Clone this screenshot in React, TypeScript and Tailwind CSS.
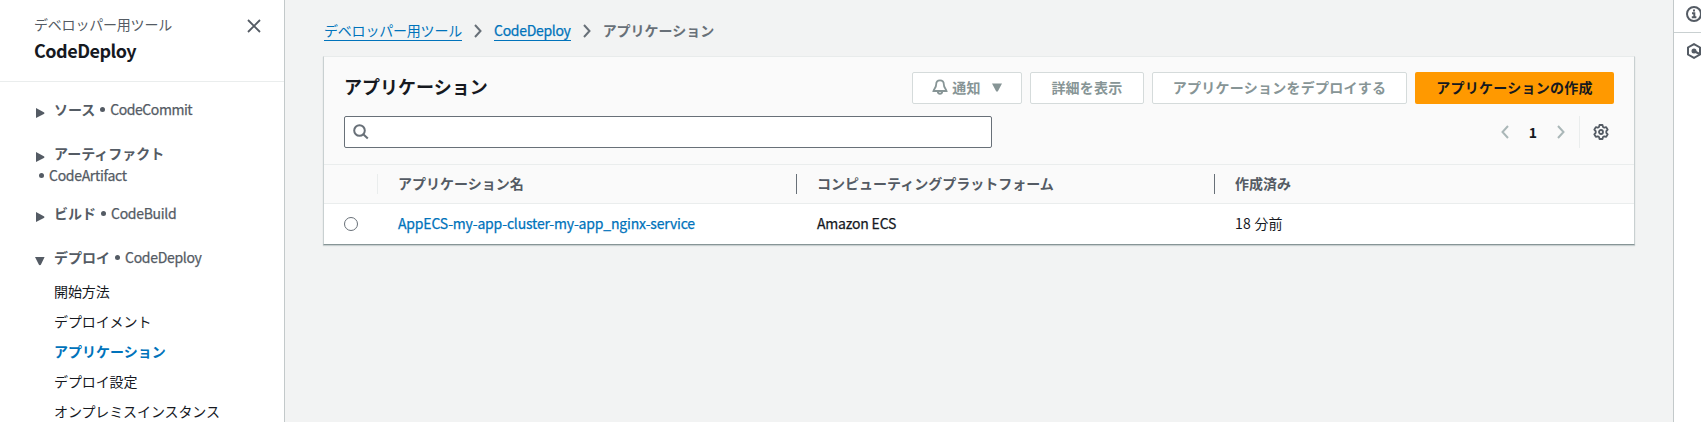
import type { ReactNode } from "react";

function Latin({ children, className = "tracking-[-0.3px]" }: { children: ReactNode; className?: string }) {
  return <span className={`text-[14px] [-webkit-text-stroke:0.25px] ${className}`}>{children}</span>;
}

function Caret({ open = false }: { open?: boolean }) {
  return (
    <svg width="10" height="10" viewBox="0 0 10 10" className="mt-[10px] shrink-0 fill-[#545b64]">
      {open ? <path d="M0 1h9.6L6 8.500a1.200 1.200 0 0 1-2.200 0z" /> : <path d="M1 0v10L8.800 5.900a1 1 0 0 0 0-1.700z" />}
    </svg>
  );
}

function Service({ name, wrap = false }: { name: string; wrap?: boolean }) {
  return (
    <span className="flex items-center">
      <i className={wrap ? "ml-[4px] mr-[5px] size-[5px] rounded-full bg-[#545b64]" : "ml-[5px] mr-[5px] size-[5px] rounded-full bg-[#545b64]"} />
      <Latin className={name === "CodeCommit" ? "tracking-[-0.45px]" : "tracking-[-0.3px]"}>{name}</Latin>
    </span>
  );
}

function Section({ name, service, open = false, wrap = false }: { name: string; service: string; open?: boolean; wrap?: boolean }) {
  return (
    <div className="mb-[22px] text-[#545b64]">
      <div className="flex h-[22px] items-start">
        <Caret open={open} />
        <span className="ml-[9px] font-bold">{name}</span>
        {!wrap && <Service name={service} />}
      </div>
      {wrap && (
        <div className="-mb-[6px] flex h-[22px]">
          <Service name={service} wrap />
        </div>
      )}
    </div>
  );
}

function Chevron({ left = false, className = "" }: { left?: boolean; className?: string }) {
  return (
    <svg width="8" height="14" viewBox="0 0 8 14" fill="none" strokeWidth="2" className={className}>
      {left ? <path d="M7 1 1.500 7 7 13" /> : <path d="M1 1l5.500 6L1 13" />}
    </svg>
  );
}

const links = ["開始方法", "デプロイメント", "アプリケーション", "デプロイ設定", "オンプレミスインスタンス"];
const button = "flex h-8 items-center justify-center rounded-[2px] border border-[#d5dbdb] bg-white pb-[2px] font-bold tracking-[0.25px] text-[#879596]";

export default function App() {
  return (
    <div className="flex h-[422px] w-[1701px] overflow-hidden whitespace-nowrap bg-[#f2f3f3] font-['Noto_Sans_CJK_JP',sans-serif] text-[14px] leading-[22px] text-[#16191f]">
      <nav className="h-full w-[285px] shrink-0 border-r border-[#c3c9ca] bg-white">
        <div className="flex h-[82px] justify-between border-b border-[#eaeded] pl-[34px] pr-[23px] pt-[13px]">
          <div>
            <div className="tracking-[-0.2px] text-[#545b64]">デベロッパー用ツール</div>
            <div className="mt-[4px] text-[18px] font-bold leading-[22px] tracking-[-0.5px]">CodeDeploy</div>
          </div>
          <svg width="14" height="14" viewBox="0 0 14 14" className="mt-[6px] stroke-[#545b64]" strokeWidth="1.800">
            <path d="M1 1l12 12M13 1L1 13" />
          </svg>
        </div>
        <div className="pl-[35px] pt-[16px]">
          <Section name="ソース" service="CodeCommit" />
          <Section name="アーティファクト" service="CodeArtifact" wrap />
          <Section name="ビルド" service="CodeBuild" />
          <Section name="デプロイ" service="CodeDeploy" open />
          <ul className="-mt-[10px] pl-[19px] tracking-[-0.1px]">
            {links.map((l) => (
              <li key={l} className={l === "アプリケーション" ? "h-[30px] font-bold tracking-normal text-[#0073bb]" : "h-[30px]"}>{l}</li>
            ))}
          </ul>
        </div>
      </nav>

      <main className="w-[1388px] shrink-0 pl-[38px] pt-[19px]">
        <div className="flex h-[37px] items-start pl-px">
          <a className="h-[22px] border-b border-[#0073bb] tracking-[-0.2px] text-[#0073bb]">デベロッパー用ツール</a>
          <Chevron className="ml-[12px] mt-[5px] stroke-[#687078]" />
          <a className="ml-[12px] h-[22px] border-b border-[#0073bb] text-[#0073bb]"><Latin>CodeDeploy</Latin></a>
          <Chevron className="ml-[12px] mt-[5px] stroke-[#687078]" />
          <span className="ml-[12px] font-bold text-[#687078]">アプリケーション</span>
        </div>

        <section className="w-[1312px] border border-x-[#c9d0d1] border-t-[#e8ebeb] border-b-[#879596] bg-[#fafafa] shadow-[0_1px_1px_0_#c9d0d1]">
          <div className="flex h-[59px] items-start gap-2 pl-5 pr-[20px] pt-[15px]">
            <h1 className="mr-auto mt-[1px] text-[18px] font-bold leading-[26px]">アプリケーション</h1>
            <button className={`${button} w-[110px]`}>
              <svg width="16" height="16" viewBox="0 0 16 16" fill="none" className="stroke-[#879596]" strokeWidth="1.800">
                <path d="M8 1.300C5.500 1.300 4.200 3 4.200 5.200c0 3.300-2 4.300-2.700 6.800h13c-.7-2.500-2.700-3.500-2.700-6.800C11.800 3 10.500 1.300 8 1.300zM5.800 12.500c0 3 4.400 3 4.400 0" />
              </svg>
              <span className="ml-[4px]">通知</span>
              <svg width="10" height="9" viewBox="0 0 10 9" className="ml-[11px] fill-[#879596]"><path d="M0 .5h10L6 8a1.200 1.200 0 0 1-2 0z" /></svg>
            </button>
            <button className={`${button} w-[114px]`}>詳細を表示</button>
            <button className={`${button} w-[255px]`}>アプリケーションをデプロイする</button>
            <button className="h-8 w-[199px] rounded-[2px] bg-[#ff9900] pb-[2px] font-bold tracking-[0.25px] text-[#16191f]">アプリケーションの作成</button>
          </div>

          <div className="flex h-[48px] items-start pl-5">
            <div className="flex h-8 w-[648px] items-center rounded-[2px] border border-[#687078] bg-white pl-2">
              <svg width="16" height="16" viewBox="0 0 16 16" fill="none" className="stroke-[#687078]" strokeWidth="2">
                <circle cx="6.500" cy="6.500" r="5.300" /><path d="M10 10l4.800 4.500" />
              </svg>
            </div>
            <div className="ml-auto mr-[25px] flex h-8 items-center">
              <Chevron left className="stroke-[#aab7b8]" />
              <span className="w-[48px] text-center font-bold">1</span>
              <Chevron className="stroke-[#aab7b8]" />
              <i className="ml-[14px] h-8 w-px bg-[#eaeded]" />
              <svg width="16" height="16" viewBox="0 0 16 16" fill="none" className="ml-[13px] stroke-[#545b64]" strokeWidth="1.800" strokeLinejoin="round">
                <path d="M6.500 1h3l.5 1.900 1.300.8 1.900-.6 1.500 2.600L13.300 7.200v1.600l1.400 1.500-1.500 2.600-1.900-.6-1.300.8-.5 1.900h-3L6 13.100l-1.300-.8-1.900.6-1.500-2.600 1.400-1.500V7.200L1.300 5.700l1.500-2.600 1.900.6L6 2.900z" />
                <circle cx="8" cy="8" r="2" />
              </svg>
            </div>
          </div>

          <div className="flex h-[39px] items-center border-t border-[#eaeded] font-bold text-[#545b64]">
            <div className="h-5 w-[54px] border-r border-[#eaeded]" />
            <div className="h-5 w-[419px] border-r border-[#687078] pl-5 leading-[18px]">アプリケーション名</div>
            <div className="h-5 w-[418px] border-r border-[#687078] pl-5 leading-[18px]">コンピューティングプラットフォーム</div>
            <div className="h-5 pl-5 leading-[18px]">作成済み</div>
          </div>
          <div className="flex h-[41px] items-center border-t border-[#eaeded] bg-white">
            <div className="w-[54px] pl-5"><div className="size-[14px] rounded-full border border-[#687078]" /></div>
            <div className="w-[419px] pb-[2px] pl-5 text-[#0073bb]"><Latin className="tracking-[-0.18px]">AppECS-my-app-cluster-my-app_nginx-service</Latin></div>
            <div className="w-[418px] pb-[2px] pl-5"><Latin className="tracking-[-0.2px]">Amazon ECS</Latin></div>
            <div className="pb-[2px] pl-5"><span className="tracking-[0.3px]">18 </span>分前</div>
          </div>
        </section>
      </main>

      <aside className="h-full w-[28px] shrink-0 overflow-hidden border-l border-[#c3c9ca] bg-white">
        <div className="flex h-[33px] border-b border-[#c9d0d1] pl-3 pt-[6px]">
          <svg width="16" height="16" viewBox="0 0 16 16" fill="none" className="shrink-0 stroke-[#545b64]" strokeWidth="2">
            <circle cx="8" cy="8" r="7" /><path d="M6 7.300h2.300v4M5.800 11.300h4.600M7 4.600h2" />
          </svg>
        </div>
        <div className="flex pl-3 pt-[10px]">
          <svg width="16" height="16" viewBox="0 0 16 16" fill="none" className="shrink-0 stroke-[#545b64]" strokeWidth="2">
            <path d="M8 1.100l6 3.400v7l-6 3.400-6-3.400v-7zM8 8l5.500 3" /><circle cx="8" cy="8" r="1.500" className="fill-[#545b64]" />
          </svg>
        </div>
      </aside>
    </div>
  );
}
